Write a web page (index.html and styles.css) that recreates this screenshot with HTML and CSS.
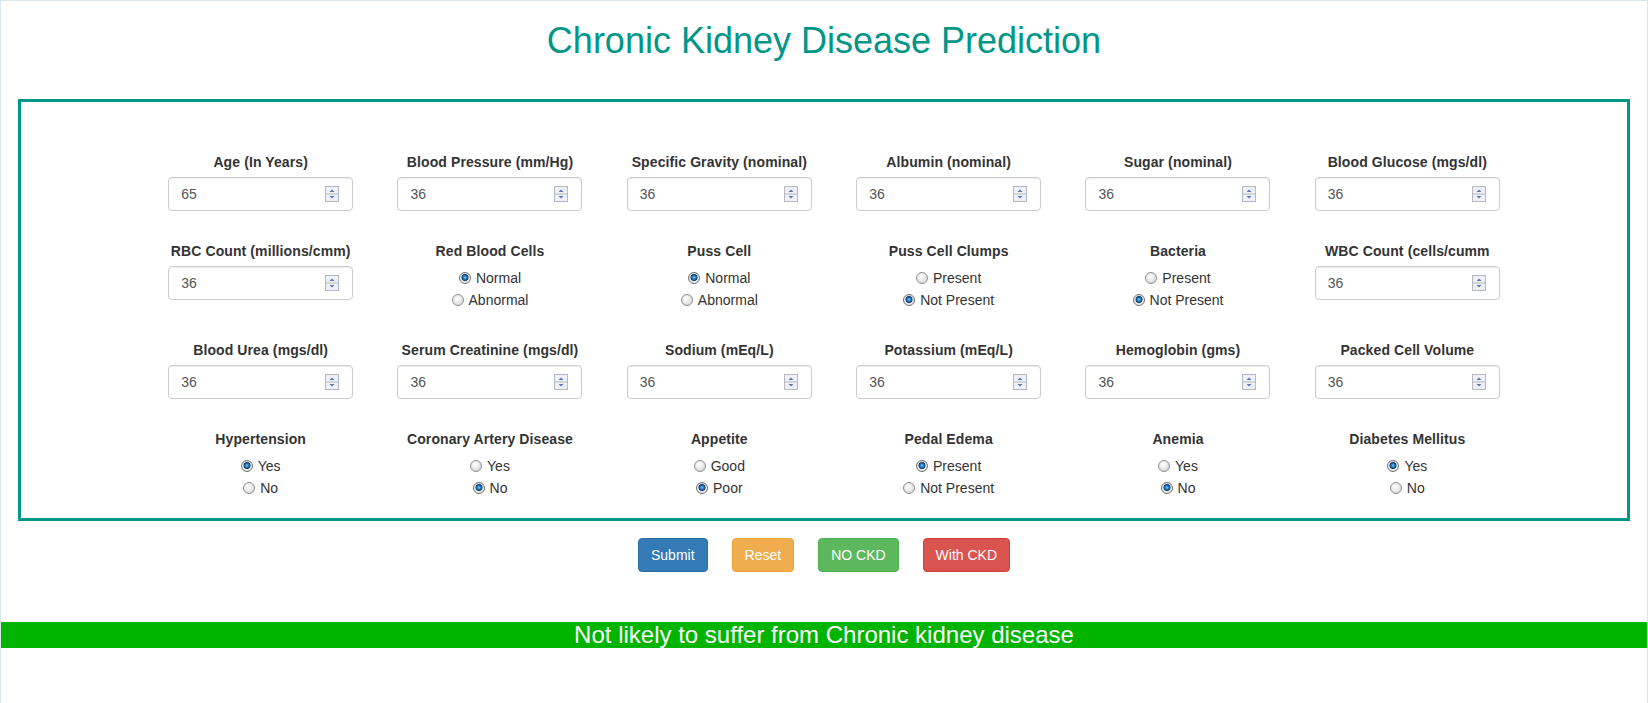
FILE: index.html
```html
<!DOCTYPE html>
<html lang="en">
<head>
<meta charset="utf-8">
<title>Chronic Kidney Disease Prediction</title>
<link rel="stylesheet" href="styles.css">
</head>
<body>
<div class="page">
  <h1 class="title">Chronic Kidney Disease Prediction</h1>

  <form class="frame">
    <div class="grid">
      <div class="field"><label class="lbl">Age (In Years)</label><div class="num"><input class="num-val" value="65"><svg class="spin" width="14" height="16" viewBox="0 0 14 16"><rect x="0.5" y="0.5" width="13" height="15" fill="#eef0f5" stroke="#b4b8c2"/><line x1="1" y1="8" x2="13" y2="8" stroke="#b4b8c2"/><path d="M7 3.5L9.5 6H4.5Z" fill="#5f74c2"/><path d="M7 12.5L9.5 10H4.5Z" fill="#5f74c2"/></svg></div></div>
      <div class="field"><label class="lbl">Blood Pressure (mm/Hg)</label><div class="num"><input class="num-val" value="36"><svg class="spin" width="14" height="16" viewBox="0 0 14 16"><rect x="0.5" y="0.5" width="13" height="15" fill="#eef0f5" stroke="#b4b8c2"/><line x1="1" y1="8" x2="13" y2="8" stroke="#b4b8c2"/><path d="M7 3.5L9.5 6H4.5Z" fill="#5f74c2"/><path d="M7 12.5L9.5 10H4.5Z" fill="#5f74c2"/></svg></div></div>
      <div class="field"><label class="lbl">Specific Gravity (nominal)</label><div class="num"><input class="num-val" value="36"><svg class="spin" width="14" height="16" viewBox="0 0 14 16"><rect x="0.5" y="0.5" width="13" height="15" fill="#eef0f5" stroke="#b4b8c2"/><line x1="1" y1="8" x2="13" y2="8" stroke="#b4b8c2"/><path d="M7 3.5L9.5 6H4.5Z" fill="#5f74c2"/><path d="M7 12.5L9.5 10H4.5Z" fill="#5f74c2"/></svg></div></div>
      <div class="field"><label class="lbl">Albumin (nominal)</label><div class="num"><input class="num-val" value="36"><svg class="spin" width="14" height="16" viewBox="0 0 14 16"><rect x="0.5" y="0.5" width="13" height="15" fill="#eef0f5" stroke="#b4b8c2"/><line x1="1" y1="8" x2="13" y2="8" stroke="#b4b8c2"/><path d="M7 3.5L9.5 6H4.5Z" fill="#5f74c2"/><path d="M7 12.5L9.5 10H4.5Z" fill="#5f74c2"/></svg></div></div>
      <div class="field"><label class="lbl">Sugar (nominal)</label><div class="num"><input class="num-val" value="36"><svg class="spin" width="14" height="16" viewBox="0 0 14 16"><rect x="0.5" y="0.5" width="13" height="15" fill="#eef0f5" stroke="#b4b8c2"/><line x1="1" y1="8" x2="13" y2="8" stroke="#b4b8c2"/><path d="M7 3.5L9.5 6H4.5Z" fill="#5f74c2"/><path d="M7 12.5L9.5 10H4.5Z" fill="#5f74c2"/></svg></div></div>
      <div class="field"><label class="lbl">Blood Glucose (mgs/dl)</label><div class="num"><input class="num-val" value="36"><svg class="spin" width="14" height="16" viewBox="0 0 14 16"><rect x="0.5" y="0.5" width="13" height="15" fill="#eef0f5" stroke="#b4b8c2"/><line x1="1" y1="8" x2="13" y2="8" stroke="#b4b8c2"/><path d="M7 3.5L9.5 6H4.5Z" fill="#5f74c2"/><path d="M7 12.5L9.5 10H4.5Z" fill="#5f74c2"/></svg></div></div>

      <div class="field"><label class="lbl">RBC Count (millions/cmm)</label><div class="num"><input class="num-val" value="36"><svg class="spin" width="14" height="16" viewBox="0 0 14 16"><rect x="0.5" y="0.5" width="13" height="15" fill="#eef0f5" stroke="#b4b8c2"/><line x1="1" y1="8" x2="13" y2="8" stroke="#b4b8c2"/><path d="M7 3.5L9.5 6H4.5Z" fill="#5f74c2"/><path d="M7 12.5L9.5 10H4.5Z" fill="#5f74c2"/></svg></div></div>
      <div class="field"><label class="lbl">Red Blood Cells</label><div class="opts"><label class="opt"><input type="radio" class="rad" name="rbc" checked>Normal</label><label class="opt"><input type="radio" class="rad" name="rbc">Abnormal</label></div></div>
      <div class="field"><label class="lbl">Puss Cell</label><div class="opts"><label class="opt"><input type="radio" class="rad" name="pc" checked>Normal</label><label class="opt"><input type="radio" class="rad" name="pc">Abnormal</label></div></div>
      <div class="field"><label class="lbl">Puss Cell Clumps</label><div class="opts"><label class="opt"><input type="radio" class="rad" name="pcc">Present</label><label class="opt"><input type="radio" class="rad" name="pcc" checked>Not Present</label></div></div>
      <div class="field"><label class="lbl">Bacteria</label><div class="opts"><label class="opt"><input type="radio" class="rad" name="ba">Present</label><label class="opt"><input type="radio" class="rad" name="ba" checked>Not Present</label></div></div>
      <div class="field"><label class="lbl">WBC Count (cells/cumm</label><div class="num"><input class="num-val" value="36"><svg class="spin" width="14" height="16" viewBox="0 0 14 16"><rect x="0.5" y="0.5" width="13" height="15" fill="#eef0f5" stroke="#b4b8c2"/><line x1="1" y1="8" x2="13" y2="8" stroke="#b4b8c2"/><path d="M7 3.5L9.5 6H4.5Z" fill="#5f74c2"/><path d="M7 12.5L9.5 10H4.5Z" fill="#5f74c2"/></svg></div></div>

      <div class="field"><label class="lbl">Blood Urea (mgs/dl)</label><div class="num"><input class="num-val" value="36"><svg class="spin" width="14" height="16" viewBox="0 0 14 16"><rect x="0.5" y="0.5" width="13" height="15" fill="#eef0f5" stroke="#b4b8c2"/><line x1="1" y1="8" x2="13" y2="8" stroke="#b4b8c2"/><path d="M7 3.5L9.5 6H4.5Z" fill="#5f74c2"/><path d="M7 12.5L9.5 10H4.5Z" fill="#5f74c2"/></svg></div></div>
      <div class="field"><label class="lbl">Serum Creatinine (mgs/dl)</label><div class="num"><input class="num-val" value="36"><svg class="spin" width="14" height="16" viewBox="0 0 14 16"><rect x="0.5" y="0.5" width="13" height="15" fill="#eef0f5" stroke="#b4b8c2"/><line x1="1" y1="8" x2="13" y2="8" stroke="#b4b8c2"/><path d="M7 3.5L9.5 6H4.5Z" fill="#5f74c2"/><path d="M7 12.5L9.5 10H4.5Z" fill="#5f74c2"/></svg></div></div>
      <div class="field"><label class="lbl">Sodium (mEq/L)</label><div class="num"><input class="num-val" value="36"><svg class="spin" width="14" height="16" viewBox="0 0 14 16"><rect x="0.5" y="0.5" width="13" height="15" fill="#eef0f5" stroke="#b4b8c2"/><line x1="1" y1="8" x2="13" y2="8" stroke="#b4b8c2"/><path d="M7 3.5L9.5 6H4.5Z" fill="#5f74c2"/><path d="M7 12.5L9.5 10H4.5Z" fill="#5f74c2"/></svg></div></div>
      <div class="field"><label class="lbl">Potassium (mEq/L)</label><div class="num"><input class="num-val" value="36"><svg class="spin" width="14" height="16" viewBox="0 0 14 16"><rect x="0.5" y="0.5" width="13" height="15" fill="#eef0f5" stroke="#b4b8c2"/><line x1="1" y1="8" x2="13" y2="8" stroke="#b4b8c2"/><path d="M7 3.5L9.5 6H4.5Z" fill="#5f74c2"/><path d="M7 12.5L9.5 10H4.5Z" fill="#5f74c2"/></svg></div></div>
      <div class="field"><label class="lbl">Hemoglobin (gms)</label><div class="num"><input class="num-val" value="36"><svg class="spin" width="14" height="16" viewBox="0 0 14 16"><rect x="0.5" y="0.5" width="13" height="15" fill="#eef0f5" stroke="#b4b8c2"/><line x1="1" y1="8" x2="13" y2="8" stroke="#b4b8c2"/><path d="M7 3.5L9.5 6H4.5Z" fill="#5f74c2"/><path d="M7 12.5L9.5 10H4.5Z" fill="#5f74c2"/></svg></div></div>
      <div class="field"><label class="lbl">Packed Cell Volume</label><div class="num"><input class="num-val" value="36"><svg class="spin" width="14" height="16" viewBox="0 0 14 16"><rect x="0.5" y="0.5" width="13" height="15" fill="#eef0f5" stroke="#b4b8c2"/><line x1="1" y1="8" x2="13" y2="8" stroke="#b4b8c2"/><path d="M7 3.5L9.5 6H4.5Z" fill="#5f74c2"/><path d="M7 12.5L9.5 10H4.5Z" fill="#5f74c2"/></svg></div></div>

      <div class="field"><label class="lbl">Hypertension</label><div class="opts"><label class="opt"><input type="radio" class="rad" name="htn" checked>Yes</label><label class="opt"><input type="radio" class="rad" name="htn">No</label></div></div>
      <div class="field"><label class="lbl">Coronary Artery Disease</label><div class="opts"><label class="opt"><input type="radio" class="rad" name="cad">Yes</label><label class="opt"><input type="radio" class="rad" name="cad" checked>No</label></div></div>
      <div class="field"><label class="lbl">Appetite</label><div class="opts"><label class="opt"><input type="radio" class="rad" name="ap">Good</label><label class="opt"><input type="radio" class="rad" name="ap" checked>Poor</label></div></div>
      <div class="field"><label class="lbl">Pedal Edema</label><div class="opts"><label class="opt"><input type="radio" class="rad" name="pe" checked>Present</label><label class="opt"><input type="radio" class="rad" name="pe">Not Present</label></div></div>
      <div class="field"><label class="lbl">Anemia</label><div class="opts"><label class="opt"><input type="radio" class="rad" name="ane">Yes</label><label class="opt"><input type="radio" class="rad" name="ane" checked>No</label></div></div>
      <div class="field"><label class="lbl">Diabetes Mellitus</label><div class="opts"><label class="opt"><input type="radio" class="rad" name="dm" checked>Yes</label><label class="opt"><input type="radio" class="rad" name="dm">No</label></div></div>
    </div>
  </form>

  <div class="actions">
    <button class="btn btn-primary" type="button">Submit</button>
    <button class="btn btn-warning" type="button">Reset</button>
    <button class="btn btn-success" type="button">NO CKD</button>
    <button class="btn btn-danger" type="button">With CKD</button>
  </div>

  <div class="result">Not likely to suffer from Chronic kidney disease</div>
</div>
</body>
</html>
```

FILE: styles.css
```css
* { box-sizing: border-box; }

html, body {
  margin: 0;
  padding: 0;
  background: #fff;
}

body {
  font-family: "Liberation Sans", Arial, Helvetica, sans-serif;
  font-size: 14px;
  line-height: 20px;
  color: #333;
}

.page {
  width: 1648px;
  min-height: 703px;
  border: 1px solid #dce4ed;
  border-bottom: none;
  overflow: hidden;
}

.title {
  margin: 20px 0 0;
  font-size: 36px;
  line-height: 40px;
  font-weight: normal;
  color: #009688;
  text-align: center;
}

.frame {
  margin: 38px 17px 0;
  border: 3px solid #009688;
  padding: 50px 105px 20px 125px;
}

.grid {
  display: grid;
  grid-template-columns: repeat(6, 1fr);
  row-gap: 30px;
  align-items: start;
}

.field {
  display: flex;
  flex-direction: column;
  align-items: center;
}

.lbl {
  font-weight: bold;
  line-height: 20px;
  margin-bottom: 5px;
  color: #333;
  white-space: nowrap;
  letter-spacing: 0.1px;
}

.num {
  width: 185px;
  height: 34px;
  border: 1px solid #ccc;
  border-radius: 4px;
  box-shadow: inset 0 1px 1px rgba(0, 0, 0, 0.075);
  padding: 0 13px 0 12px;
  display: flex;
  align-items: center;
  background: #fff;
}

.num-val {
  flex: 1;
  min-width: 0;
  border: none;
  outline: none;
  padding: 0;
  margin: 0;
  background: transparent;
  font: inherit;
  color: #555;
}

.spin {
  flex: none;
  display: block;
}

.opts {
  display: flex;
  flex-direction: column;
  align-items: center;
  padding-top: 1px;
  margin-bottom: -1px;
}

.opt {
  display: flex;
  align-items: center;
  height: 22px;
  line-height: 22px;
  color: #333;
  white-space: nowrap;
}

.rad {
  appearance: none;
  -webkit-appearance: none;
  width: 12px;
  height: 12px;
  margin: 0 5px 0 0;
  border-radius: 50%;
  border: 1px solid #8e8e8e;
  background: radial-gradient(circle at 40% 35%, #ffffff 0, #ececec 40%, #cfcfcf 100%);
  flex: none;
}

.rad:checked {
  border-color: #6e6e6e;
  background: radial-gradient(circle at 50% 45%, #7cc8f2 0, #2a82c6 1.6px, #0c3f72 3.2px, #dcdcdc 3.8px, #efefef 4.6px, #cfcfcf 100%);
}

.actions {
  display: flex;
  justify-content: center;
  gap: 24px;
  margin-top: 17px;
}

.btn {
  font-family: inherit;
  font-size: 14px;
  line-height: 20px;
  padding: 6px 12px;
  border: 1px solid transparent;
  border-radius: 4px;
  color: #fff;
  margin: 0;
}

.btn-primary { background: #337ab7; border-color: #2e6da4; }
.btn-warning { background: #f0ad4e; border-color: #eea236; }
.btn-success { background: #5cb85c; border-color: #4cae4c; }
.btn-danger { background: #d9534f; border-color: #d43f3a; }

.result {
  margin-top: 50px;
  height: 26px;
  line-height: 26px;
  background: #00b400;
  color: #fff;
  font-size: 24px;
  text-align: center;
}
```
